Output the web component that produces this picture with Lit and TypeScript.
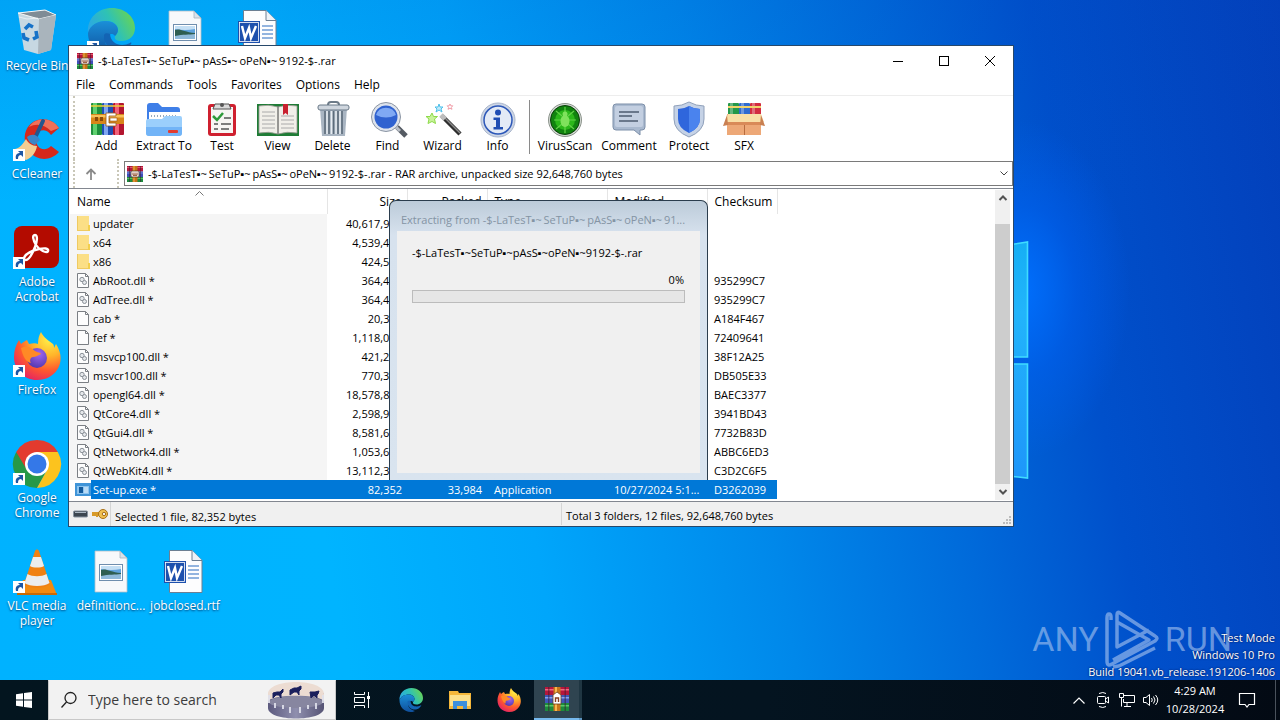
import { LitElement, html, svg, css, TemplateResult, SVGTemplateResult } from "lit";
import { customElement } from "lit/decorators.js";
import { classMap } from "lit/directives/class-map.js";

const SEP = "▪~";
const WIDE_SEP = "▪~\u2009";
const PARTS = ["-$-LaTesT", "SeTuP", "pAsS", "oPeN"];
const ARCHIVE = [...PARTS, "9192-$-.rar"].join(SEP);
const ARCHIVE_WIDE = [...PARTS, "9192-$-.rar"].join(WIDE_SEP);
const ARCHIVE_CUT = [...PARTS, "91..."].join(WIDE_SEP);

const pic = (w: number, h: number, box: string, body: SVGTemplateResult): TemplateResult =>
  html`<svg width=${w} height=${h} viewBox=${box} aria-hidden="true">${body}</svg>`;

/* ---------- small shared art ---------- */

const books = svg`
  <rect x="0" y="0" width="11" height="32" rx="1" fill="#1f8f3c"/><rect x="2" y="0" width="4" height="32" fill="#5fd06f"/>
  <rect x="11" y="0" width="11" height="32" rx="1" fill="#1f4fb4"/><rect x="13" y="0" width="4" height="32" fill="#7fa6f2"/>
  <rect x="22" y="0" width="11" height="32" rx="1" fill="#b3152f"/><rect x="24" y="0" width="4" height="32" fill="#f2607a"/>
  <path d="M0 2h33v2H0z" fill="#f0cf3a" opacity=".75"/>
  <rect x="0" y="11" width="33" height="10" fill="#d8861a"/><path d="M0 12h33v2.500H0z" fill="#f7c25c"/>
  <path d="M4 14h3v4H4zM9 14h3v4H9z" fill="#8a4b08"/>
  <path d="M15 10h10v3h-7v7h7v3H15z" fill="#fff" stroke="#9b5a1c" stroke-width=".8"/><rect x="19" y="15" width="7" height="3" fill="#fff" stroke="#9b5a1c" stroke-width=".6"/>
`;

const rarSmall = svg`
  <rect x="0" y="0" width="16" height="5.500" fill="#b5173c"/><rect x="0" y="5.500" width="16" height="5.500" fill="#3f4fb8"/>
  <rect x="0" y="11" width="16" height="5" fill="#1d8a3e"/><path d="M0 1h16v1H0z" fill="#e4566d"/><path d="M0 6.500h16v1H0z" fill="#7d93e6"/><path d="M0 12h16v1H0z" fill="#55bf63"/>
  <path d="M2 0h1v16H2zM13 0h1v16h-1z" fill="#3a1a2c" opacity=".5"/>
  <rect x="5.500" y="0" width="5" height="16" fill="#c47318"/><path d="M6.500 0h1v16h-1z" fill="#f5b04a"/>
  <rect x="4" y="5" width="8" height="6" rx="1" fill="#fff" stroke="#5a3a22" stroke-width=".8"/>
  <path d="M6 6.500v2.800h4V6.500M8 6.500v2.500" fill="none" stroke="#8a3f1e"/>
`;

const rarTask = svg`
  <rect x="0" y="0" width="8" height="24" fill="#b5173c"/><rect x="8" y="0" width="8" height="24" fill="#b5173c"/><rect x="16" y="0" width="8" height="24" fill="#b5173c"/>
  <rect x="0" y="8" width="24" height="8" fill="#3f56b8"/><rect x="0" y="16" width="24" height="8" fill="#1d8a3e"/>
  <path d="M0 2h24v1.500H0z" fill="#ec6a80"/><path d="M0 10h24v1.500H0z" fill="#86a0ee"/><path d="M0 18h24v1.500H0z" fill="#5cc86a"/>
  <path d="M3 0h1.500v24H3zM19.500 0H21v24h-1.500z" fill="#3a1a2c" opacity=".5"/>
  <rect x="8.500" y="0" width="7" height="24" fill="#c8761a"/><path d="M10 0h2v24h-2z" fill="#f7b750"/>
  <path d="M8 8l4-3 4 3v9H8z" fill="#fff" stroke="#6b4322" stroke-width=".8"/><path d="M10.500 15v-4h3v4" fill="none" stroke="#8a3f1e" stroke-width="1.400"/>
`;

const edge = svg`
  <defs>
    <linearGradient id="eg" x1="0" y1="0.600" x2="1" y2="0.200"><stop offset="0" stop-color="#2ba7e6"/><stop offset=".5" stop-color="#2fc2b4"/><stop offset="1" stop-color="#6ed64a"/></linearGradient>
    <linearGradient id="eb" x1="0" y1="0" x2="0" y2="1"><stop offset="0" stop-color="#1b8fd8"/><stop offset="1" stop-color="#0f4f9c"/></linearGradient>
  </defs>
  <path d="M1 25C0 10 11 0 25 0c13 0 23 9 23 20 0 8-6 13-13 13-6 0-8-2-7-5 2-2 3-4 3-6 0-5-5-9-11-9C11 13 3 17 1 25z" fill="url(#eg)"/>
  <path d="M1 25c2-8 10-12 17-12 8 0 13 4 13 9 0 2-1 4-3 6-2-3-6-2-8 0-5 5 0 15 12 18-3 2-7 2-9 2C11 48 1 38 1 25z" fill="url(#eb)"/>
  <path d="M17 27c-1 10 7 17 17 16 5-1 8-4 10-7 1-1 0-2-1-1-8 4-19 2-20-9-3-1-5-1-6 1z" fill="#1364b4"/>
`;

const firefox = svg`
  <defs>
    <radialGradient id="ff" cx=".75" cy=".15" r="1"><stop offset="0" stop-color="#fff04a"/><stop offset=".35" stop-color="#ffb42a"/><stop offset=".65" stop-color="#ff5a2d"/><stop offset="1" stop-color="#e0186e"/></radialGradient>
    <radialGradient id="fp" cx=".6" cy=".3" r=".8"><stop offset="0" stop-color="#a065f0"/><stop offset="1" stop-color="#4a34a8"/></radialGradient>
  </defs>
  <path d="M28 0c2 5 8 9 12 12 1 1 1 3 1 4l2-4c6 9 6 19 1 26-4 6-11 10-20 10C11 48 1 38 1 25 1 18 3 13 6 8l2 4c2-2 4-3 6-4l2 4c4-1 7-1 9 0 0-5 1-9 3-12z" fill="url(#ff)"/>
  <circle cx="24" cy="26" r="10" fill="url(#fp)"/>
  <path d="M8 16c6-3 11 0 14 3 3 2 5 1 6 3-3 1-5 3-8 3-2 0-4 3-2 6-5-1-8-6-10-15z" fill="#ff8a26"/>
`;

const shortcut = svg`
  <rect x="0" y="33" width="12" height="12" fill="#fff"/>
  <path d="M3 43c-1-4 1-6 4-6l-2-2h5v6l-2-2c-2 0-3 1-3 4z" fill="#1e57a4"/>
`;

const pictureFile = svg`
  <path d="M8 3h25l7 7v34H8z" fill="#f7f9fb" stroke="#b3bfc9" stroke-width=".8"/><path d="M33 3v7h7z" fill="#d9e2ea" stroke="#a8b4be" stroke-width=".8"/>
  <rect x="12.500" y="16.500" width="23" height="16" fill="#fff" stroke="#6f8eae"/><path d="M14 18h20v8H14z" fill="#5fa2dc"/><path d="M14 18h20v3q-10 2-20 0z" fill="#c4dff4"/><path d="M14 22c5-2 9 2 20 3v6H14z" fill="#2f5e50"/><path d="M14 28c8-2 14-1 20-2v5H14z" fill="#8fb9d9"/>
`;

const wordFile = svg`
  <path d="M8.500 2.500H31l10 10v32H8.500z" fill="#fdfdfe" stroke="#6c7f93"/><path d="M31 2.500v10h10" fill="#eef2f7" stroke="#6c7f93"/>
  <path d="M27 18h11M27 22h11M27 26h11M27 30h11" stroke="#2b6cc0" stroke-width="1.200"/>
  <rect x="3" y="13" width="22" height="22" fill="#1d50ad"/><rect x="4.500" y="14.500" width="19" height="19" fill="none" stroke="#fff" stroke-width=".8"/>
  <path d="M7 18l3 12 4-10 2 10 5-12" fill="none" stroke="#fff" stroke-width="2.400"/>
`;

/* ---------- desktop icons ---------- */

interface Shortcut { label: string; col: number; row: number; art: SVGTemplateResult; link?: boolean; }

const bin = svg`
  <path d="M5 5l27-3 11 5-5 35-13 4-14-4z" fill="#d3dbe0" opacity=".94"/><path d="M5 5l27-3 11 5-17 4z" fill="#7f8c96" stroke="#f4f7f8"/>
  <path d="M26 11l17-4-5 35-13 4z" fill="#a9b4bc"/><path d="M6 9l8 2 11-1" stroke="#fff" stroke-width=".8" fill="none" opacity=".7"/>
  <path d="M12 21l4-4 4 2M23 23l1 6-4 2M16 32l-5-2-1-5" fill="none" stroke="#1672c8" stroke-width="3.600"/>
`;
const ccleaner = svg`
  <path d="M46 12C38-1 16 0 12 18c-3 20 19 34 34 18l-8-6c-7 7-15 2-15-7s9-12 15-4z" fill="#d5281c"/><path d="M46 12C38 0 22 1 16 11c7-4 15-3 22 4z" fill="#f0715a"/>
  <path d="M30 5l-8 17" stroke="#24568e" stroke-width="4" stroke-linecap="round"/><path d="M14 21c5-4 11-2 13 3l-5 5c-4-1-7-4-8-8z" fill="#3a86c8"/>
  <path d="M2 33c5-1 8-5 11-10 2 4 6 7 11 7-1 6-5 12-11 14-3-1-3-3-5-5-2 1-5-2-6-6z" fill="#f3cd92"/>
`;
const acrobat = svg`
  <rect x="1" y="2" width="45" height="42" rx="8" fill="#b30b00"/>
  <path d="M11 34c1-4 9-8 15-9 5-1 10-1 9 2s-9-1-12-6-4-10-1-10 2 7 0 12-6 13-9 13-2-1-2-2z" fill="none" stroke="#fff" stroke-width="2.400"/>
`;
const chrome = svg`
  <path d="M24 24L3.200 12A24 24 0 0 1 44.800 12z" fill="#e33b2e"/>
  <path d="M24 24v24A24 24 0 0 1 3.200 12z" fill="#279847"/>
  <path d="M14 30L3.200 12 24 12z" fill="#e33b2e"/><path d="M34 30L24 48 14 30z" fill="#279847"/>
  <path d="M34 30L24 48A24 24 0 0 0 44.800 12H24z" fill="#fcc31e"/><circle cx="24" cy="24" r="12" fill="#fff"/><circle cx="24" cy="24" r="9.500" fill="#3478e8"/>
`;
const vlc = svg`
  <path d="M10 32h28l6 15H4z" fill="#f28a10"/><path d="M4 45h40v2H4z" fill="#c96a05"/><path d="M22 3c1-2 3-2 4 0l11 33c-5 5-21 5-26 0z" fill="#f08112"/>
  <path d="M20 9h8l3 9c-3 2-11 2-14 0zM14.500 26c5 3 14 3 19 0l3 9c-5 4-20 4-25 0z" fill="#eceded"/>
`;

const shortcuts: Shortcut[] = [
  { label: "Recycle Bin", col: 1, row: 1, art: bin },
  { label: "CCleaner", col: 1, row: 2, art: ccleaner, link: true },
  { label: "Adobe Acrobat", col: 1, row: 3, art: acrobat, link: true },
  { label: "Firefox", col: 1, row: 4, art: firefox, link: true },
  { label: "Google Chrome", col: 1, row: 5, art: chrome, link: true },
  { label: "VLC media player", col: 1, row: 6, art: vlc, link: true },
  { label: "", col: 2, row: 1, art: edge, link: true },
  { label: "", col: 3, row: 1, art: pictureFile },
  { label: "", col: 4, row: 1, art: wordFile },
  { label: "definitionc...", col: 2, row: 6, art: pictureFile },
  { label: "jobclosed.rtf", col: 3, row: 6, art: wordFile },
];

/* ---------- toolbar art ---------- */

const tools: Array<{ name: string; w: number; art: SVGTemplateResult; rule?: boolean }> = [
  { name: "Add", w: 55, art: svg`<g transform="translate(2 2)">${books}</g>` },
  { name: "Extract To", w: 60, art: svg`
    <path d="M1 5q0-3 3-3h8l4 4h15q3 0 3 3v22H1z" fill="#3f7fe8"/><rect x="3" y="11" width="31" height="14" fill="#fff"/>
    <path d="M5 15h26" stroke="#9ab" stroke-width="2" stroke-dasharray="1 2"/>
    <path d="M0 20q0-2 2-2h14l3-3h15q2 0 2 2v15q0 3-3 3H3q-3 0-3-3z" fill="#9bcffc"/><path d="M0 26h36v6q0 3-3 3H3q-3 0-3-3z" fill="#72b4f7"/><rect x="22" y="29" width="10" height="3" rx="1" fill="#e23b30"/>` },
  { name: "Test", w: 56, art: svg`
    <rect x="4" y="3" width="28" height="32" rx="3" fill="#cf202f"/><path d="M7 6h22v26H7z" fill="#f7f5f3"/><path d="M11 3h14l2 5H9z" fill="#d9d9d9" stroke="#555"/><circle cx="18" cy="4" r="2" fill="#555"/>
    <path d="M9 15l4 4 6-7" fill="none" stroke="#2e9a3a" stroke-width="2.500"/><path d="M20 17h7M10 23h4M17 23h10M10 28h4M17 28h8" stroke="#555" stroke-width="1.300"/>` },
  { name: "View", w: 55, art: svg`
    <path d="M-3 3h42v32H-3z" fill="#1f7c36"/><path d="M-1 5q10-2 19 1v27q-9-3-19-1zM37 5q-10-2-19 1v27q9-3 19-1z" fill="#f1efe9" stroke="#9a9a92" stroke-width=".8"/>
    <path d="M2 11h13M2 15h13M2 19h13M2 23h13M2 27h13M21 15h13M21 19h13M21 23h13M21 27h13" stroke="#aaa"/><path d="M18 5v28" stroke="#777"/><path d="M23 3h5v11l-2.500-2-2.500 2z" fill="#c8202e"/>` },
  { name: "Delete", w: 55, art: svg`
    <path d="M13 4q0-3 3-3h5q3 0 3 3" fill="none" stroke="#6d7b88" stroke-width="2"/><path d="M5 7h27l-2 28H7z" fill="#a9b5c2"/><path d="M10 10v23M14 10v23M18.500 10v23M23 10v23M27 10v23" stroke="#5c6b7a" stroke-width="1.600"/><path d="M12 10v23M16.500 10v23M21 10v23M25 10v23" stroke="#e8edf2" stroke-width="1.500"/>
    <rect x="3" y="4" width="31" height="5" rx="2" fill="#cfd6de" stroke="#697887"/>` },
  { name: "Find", w: 55, art: svg`
    <path d="M27 26l9 9" stroke="#555b63" stroke-width="5"/><path d="M25 25l5 5" stroke="#b8bec6" stroke-width="3"/><circle cx="16" cy="16" r="14.500" fill="#dde3ec" stroke="#8b95a3"/><circle cx="16" cy="16" r="11.500" fill="#2f62d0"/><path d="M6 14a10.500 10.500 0 0 1 20 0q-10 5-20 0z" fill="#7fa9f4"/>` },
  { name: "Wizard", w: 55, art: svg`
    <path d="M17 15l18 18" stroke="#2e2e2e" stroke-width="4.500"/><path d="M17 14l18 18" stroke="#8b8b8b" stroke-width="1.500"/><path d="M16 14l4 4" stroke="#bdbdbd" stroke-width="5"/>
    <path d="M7 12l1.500 3.500 4 0-3 2.500 1 4.500-3.500-2-4 2 1-4.500-3-2.500 4 0z" fill="#c8f29a" stroke="#8edb4a"/><path d="M14 3l1 3h3l-2 2 1 3-3-2-3 2 1-3-2-2h3z" fill="#bfeafb" stroke="#4fc0ea"/><path d="M25 3l.8 1.800h2l-1.500 1.500.7 2-2-1-2 1 .7-2L22.200 4.800h2z" fill="#fff" stroke="#ee8a97" stroke-width=".8"/>` },
  { name: "Info", w: 55, art: svg`
    <circle cx="18" cy="19" r="17" fill="#cdd6e6" stroke="#aab6cb"/><circle cx="18" cy="19" r="14" fill="#e3eaf6" stroke="#2c57b8" stroke-width="1.500"/><circle cx="18" cy="11.500" r="3" fill="#1f4db3"/><path d="M13.500 16.500H20V26h3v2.500h-9.500V26H16v-7h-2.500z" fill="#1f4db3"/>` },
  { name: "VirusScan", w: 64, rule: true, art: svg`
    <circle cx="18" cy="19" r="16.500" fill="#d5dad5" stroke="#8c948c"/><circle cx="18" cy="19" r="14.500" fill="#11830f" stroke="#0a3d0a"/><circle cx="18" cy="19" r="10" fill="#2bb81a"/>
    <path d="M9 10l6 5M27 10l-6 5M7 19h22M9 28l6-5M27 28l-6-5M18 6v26" stroke="#63d248" stroke-width="1.200"/><ellipse cx="18" cy="20" rx="4.500" ry="6" fill="#7fe25c"/><circle cx="18" cy="13" r="2.500" fill="#7fe25c"/>` },
  { name: "Comment", w: 64, art: svg`
    <path d="M5 3h26q3 0 3 3v20q0 3-3 3h-2v5l-6-5H5q-3 0-3-3V6q0-3 3-3z" fill="#a9b9cf" stroke="#7d8fa9"/><rect x="4" y="5" width="28" height="21" rx="2" fill="#c3cfe1"/><path d="M8 11h20M8 15h13M8 20h19" stroke="#4d5c70" stroke-width="1.500"/>` },
  { name: "Protect", w: 56, art: svg`
    <path d="M18 1q7 4 15 4v13q0 12-15 18Q3 30 3 18V5q8 0 15-4z" fill="#c5d2e6" stroke="#8fa0ba"/><path d="M18 5q5 3 11 3v10q0 9-11 14Q7 27 7 18V8q6 0 11-3z" fill="#2f66dc"/><path d="M18 5q5 3 11 3v10q0 9-11 14z" fill="#4a83ee"/>` },
  { name: "SFX", w: 54, art: svg`
    <rect x="2" y="2" width="11" height="14" rx="1" fill="#25984a"/><rect x="13" y="2" width="11" height="14" rx="1" fill="#2f6bd0"/><rect x="24" y="2" width="11" height="14" rx="1" fill="#d32c3f"/>
    <path d="M4 2h3v12H4zM15 2h3v12h-3zM26 2h3v12h-3z" fill="#fff" opacity=".3"/><path d="M2 5h33v2H2z" fill="#f2d36b"/>
    <path d="M1 13h34v21H1z" fill="#eda877"/><path d="M2 13h33l3 8H-1z" fill="#f9dfa6"/><path d="M1 21h34v3H1z" fill="#d98a58"/><path d="M18.500 24v10" stroke="#b86c3e"/><path d="M1 14l-4 11 5-1zM35 14l4 11-5-1z" fill="#c98052"/>` },
];

/* ---------- archive content ---------- */

type Kind = "folder" | "dll" | "file" | "exe";
interface Entry { name: string; kind: Kind; size: string; packed?: string; type?: string; modified?: string; crc?: string; }

const entries: Entry[] = [
  { name: "updater", kind: "folder", size: "40,617,984" },
  { name: "x64", kind: "folder", size: "4,539,424" },
  { name: "x86", kind: "folder", size: "424,528" },
  { name: "AbRoot.dll *", kind: "dll", size: "364,496", crc: "935299C7" },
  { name: "AdTree.dll *", kind: "dll", size: "364,496", crc: "935299C7" },
  { name: "cab *", kind: "file", size: "20,382", crc: "A184F467" },
  { name: "fef *", kind: "file", size: "1,118,062", crc: "72409641" },
  { name: "msvcp100.dll *", kind: "dll", size: "421,200", crc: "38F12A25" },
  { name: "msvcr100.dll *", kind: "dll", size: "770,384", crc: "DB505E33" },
  { name: "opengl64.dll *", kind: "dll", size: "18,578,800", crc: "BAEC3377" },
  { name: "QtCore4.dll *", kind: "dll", size: "2,598,912", crc: "3941BD43" },
  { name: "QtGui4.dll *", kind: "dll", size: "8,581,632", crc: "7732B83D" },
  { name: "QtNetwork4.dll *", kind: "dll", size: "1,053,696", crc: "ABBC6ED3" },
  { name: "QtWebKit4.dll *", kind: "dll", size: "13,112,320", crc: "C3D2C6F5" },
  { name: "Set-up.exe *", kind: "exe", size: "82,352", packed: "33,984", type: "Application", modified: "10/27/2024 5:1...", crc: "D3262039" },
];

const sheet = svg`<path d="M.5 1.500h8l3 3v11H.500z" fill="#fdfdfd" stroke="#7b7f84"/><path d="M8.500 1.500v3h3" fill="none" stroke="#7b7f84"/>`;
const kinds: Record<Kind, SVGTemplateResult> = {
  folder: svg`<path d="M0 1h12v10h1v5H0z" fill="#fbdf86"/><path d="M0 1h1v15H0zM0 15h12v1H0z" fill="#efca62"/><path d="M11 10h2v6h-2z" fill="#f2cf4e"/>`,
  file: sheet,
  dll: svg`${sheet}<circle cx="5" cy="7.500" r="2.200" fill="#e4e7ea" stroke="#8a9097"/><circle cx="7.500" cy="10.500" r="2" fill="#e4e7ea" stroke="#8a9097"/>`,
  exe: svg`<rect x="-2" y="2" width="16" height="13" fill="#3f94d8"/><rect x="0" y="5" width="12" height="8" fill="#8cc3ee"/><rect x="2" y="6" width="4" height="6" fill="#125a9c"/><path d="M7 7h4M7 9h4M7 11h4" stroke="#e8f3fc"/>`,
};

@customElement("archive-window")
class ArchiveWindow extends LitElement {
  static styles = css`
    :host { display: block; background: #fff; border: 1px solid #27486a; color: #000;
      font: 12px/16px "Open Sans", "Noto Sans", sans-serif; }
    svg { display: block; overflow: visible; flex: none; }
    button { font: inherit; color: inherit; background: none; border: 0; padding: 0; margin: 0; }
    .title { display: flex; align-items: center; height: 29px; padding-left: 8px; gap: 5px; }
    .title-text { flex: 1; font-size: 11px; padding-top: 1px; }
    .captions { display: flex; }
    .caption { width: 46px; height: 29px; display: grid; place-items: center; }
    .menu { display: flex; height: 20px; align-items: center; padding-left: 7px; gap: 14px; border-bottom: 1px solid #ededed; }
    .tools { display: flex; height: 63px; padding-left: 4px; }
    .grip { width: 0; border-left: 2px dotted #c9c7b8; }
    .tools .grip { margin-right: 4px; }
    .tool { display: flex; flex-direction: column; align-items: center; padding-top: 5px; gap: 1px; }
    .rule { width: 1px; height: 54px; margin: 4px 3px 0 4px; background: #8a8a8a; }
    .path { display: flex; height: 29px; align-items: center; padding-left: 4px; }
    .path .grip { align-self: stretch; }
    .up { width: 32px; display: grid; place-items: center; margin-right: 10px; }
    .combo { flex: 1; display: flex; align-items: center; height: 23px; border: 1px solid #7a7a7a; padding: 0 4px 0 2px; gap: 5px; margin-left: 5px; }
    .combo select { flex: 1; min-width: 0; appearance: none; border: 0; background: none; padding: 0; color: inherit; font: 11px/16px "Open Sans", "Noto Sans", sans-serif; }
    .list { display: flex; border-top: 1px solid #828790; border-bottom: 1px solid #828790; height: 312px; }
    .pane { flex: 1; overflow: hidden; padding-left: 1px; }
    table { border-collapse: collapse; table-layout: fixed; width: 707px; font-size: 11px; }
    .c-name { width: 257px; } .c-num { width: 80px; } .c-type { width: 120px; } .c-mod { width: 100px; } .c-crc { width: 70px; }
    th { height: 25px; padding: 0 5px 0 7px; font-weight: 400; font-size: 12px; text-align: left; border-right: 1px solid #e5e5e5; box-sizing: border-box; position: relative; }
    th.num, td.num { text-align: right; }
    .sort { position: absolute; left: 125px; top: 2px; }
    td { height: 19px; padding: 0 5px 0 7px; white-space: nowrap; line-height: 19px; box-sizing: border-box; }
    td.name { background: #f5f5f5; }
    .cell { display: flex; align-items: center; gap: 2px; }
    .picked td { background: #0078d7; color: #fff; }
    .picked td.name { background: linear-gradient(90deg, #fff 21px, #0078d7 21px); }
    .scroll { display: flex; flex-direction: column; align-items: center; width: 15px; margin: 1px 3px 1px 0; background: #f0f0f0; }
    .scroll button { width: 15px; height: 16px; display: grid; place-items: center; }
    .thumb { width: 15px; flex: 1; margin-top: 18px; background: #cdcdcd; }
    .status { display: flex; height: 24px; background: #f0f0f0; align-items: center; font-size: 11px; line-height: 24px; }
    .badges { display: flex; align-items: center; gap: 3px; width: 42px; padding-left: 4px; box-sizing: border-box; align-self: stretch; border-right: 1px solid #d5d5d5; }
    .picked-info { width: 451px; padding-left: 4px; box-sizing: border-box; border-right: 1px solid #d5d5d5; }
    .total { flex: 1; padding-left: 4px; }
    .picked-info, .total { padding-top: 2px; height: 22px; }
    .sizer { align-self: flex-end; }
  `;

  render() {
    return html`
      <header class="title">
        ${pic(16, 16, "0 0 16 16", rarSmall)}
        <span class="title-text">${ARCHIVE_WIDE}</span>
        <span class="captions">
          <button class="caption" aria-label="Minimize">${pic(10, 10, "0 0 10 10", svg`<path d="M0 5.500h10" stroke="#000"/>`)}</button>
          <button class="caption" aria-label="Maximize">${pic(10, 10, "0 0 10 10", svg`<rect x=".5" y=".5" width="9" height="9" fill="none" stroke="#000"/>`)}</button>
          <button class="caption" aria-label="Close">${pic(10, 10, "0 0 10 10", svg`<path d="M0 0l10 10M10 0L0 10" stroke="#000"/>`)}</button>
        </span>
      </header>
      <nav class="menu">${["File", "Commands", "Tools", "Favorites", "Options", "Help"].map((m) => html`<button>${m}</button>`)}</nav>
      <div class="tools">
        <span class="grip"></span>
        ${tools.map((t) => html`
          ${t.rule ? html`<span class="rule"></span>` : ""}
          <button class="tool" style="width:${t.w}px">${pic(36, 36, "0 0 36 36", t.art)}<span>${t.name}</span></button>`)}
      </div>
      <div class="path">
        <span class="grip"></span>
        <button class="up" aria-label="Up one level">${pic(12, 12, "0 0 12 12", svg`<path d="M6 12V1.500M1.500 6L6 1.500 10.500 6" fill="none" stroke="#8a8a8a" stroke-width="1.800"/>`)}</button>
        <span class="grip"></span>
        <label class="combo">
          ${pic(16, 16, "0 0 16 16", rarSmall)}
          <select aria-label="Archive path"><option>${ARCHIVE_WIDE} - RAR archive, unpacked size 92,648,760 bytes</option></select>
          ${pic(8, 5, "0 0 8 5", svg`<path d="M.5.500L4 4 7.500.500" fill="none" stroke="#444"/>`)}
        </label>
      </div>
      <div class="list">
        <div class="pane">
          <table>
            <colgroup><col class="c-name"><col class="c-num"><col class="c-num"><col class="c-type"><col class="c-mod"><col class="c-crc"></colgroup>
            <thead><tr>
              <th>Name<span class="sort">${pic(9, 5, "0 0 9 5", svg`<path d="M.5 4.500l4-4 4 4" fill="none" stroke="#777"/>`)}</span></th>
              <th class="num">Size</th><th class="num">Packed</th><th>Type</th><th>Modified</th><th>Checksum</th>
            </tr></thead>
            <tbody>${entries.map((e) => html`
              <tr class=${classMap({ picked: e.kind === "exe" })}>
                <td class="name"><span class="cell">${pic(14, 17, "0 0 14 17", kinds[e.kind])}<span>${e.name}</span></span></td>
                <td class="num">${e.size}</td><td class="num">${e.packed}</td><td>${e.type}</td><td>${e.modified}</td><td>${e.crc}</td>
              </tr>`)}</tbody>
          </table>
        </div>
        <div class="scroll">
          <button aria-label="Scroll up">${pic(8, 6, "0 0 8 6", svg`<path d="M.5 5L4 1.500 7.500 5" fill="none" stroke="#505050" stroke-width="2"/>`)}</button>
          <span class="thumb"></span>
          <button aria-label="Scroll down">${pic(8, 6, "0 0 8 6", svg`<path d="M.5 1L4 4.500 7.500 1" fill="none" stroke="#505050" stroke-width="2"/>`)}</button>
        </div>
      </div>
      <footer class="status">
        <span class="badges">
          ${pic(16, 8, "0 0 16 8", svg`<rect x=".5" y="1" width="14" height="6" rx="1" fill="#3c4650" stroke="#8793a0"/><path d="M2 2.500h11" stroke="#aab6c2"/>`)}
          ${pic(16, 12, "0 0 16 12", svg`<path d="M0 4h9v4H6v1H4V8H0z" fill="#d79a2a"/><circle cx="11" cy="6" r="4.500" fill="#f0c050" stroke="#a8701a"/><circle cx="12" cy="6" r="1.700" fill="#f0f0f0" stroke="#a8701a"/>`)}
        </span>
        <span class="picked-info">Selected 1 file, 82,352 bytes</span>
        <span class="total">Total 3 folders, 12 files, 92,648,760 bytes</span>
        <span class="sizer">${pic(12, 12, "0 0 12 12", svg`<path d="M8 2h2v2H8zM5 5h2v2H5zM8 5h2v2H8zM2 8h2v2H2zM5 8h2v2H5zM8 8h2v2H8z" fill="#bcbcbc"/>`)}</span>
      </footer>`;
  }
}

@customElement("extract-dialog")
class ExtractDialog extends LitElement {
  static styles = css`
    :host { display: flex; flex-direction: column; box-sizing: border-box; border: 1px solid #2b3d4d; border-bottom-width: 0; border-radius: 7px 7px 0 0;
      background: linear-gradient(#bccbd9 0, #d7e2ee 34px, #d9e4ef); padding: 0 7px 7px; color: #000; font: 11px/16px "Open Sans", "Noto Sans", sans-serif; }
    .head { height: 30px; line-height: 37px; padding-left: 4px; color: #8494a4; white-space: nowrap; overflow: hidden; }
    .body { flex: 1; background: #f0f0f0; padding: 14px 15px; }
    .file { display: block; }
    .percent { display: block; text-align: right; margin: 11px 0 2px; padding-right: 1px; }
    progress { display: block; width: 100%; height: 13px; box-sizing: border-box; appearance: none; border: 1px solid #bcbcbc; background: #e6e6e6; }
    progress::-webkit-progress-bar { background: #e6e6e6; }
    progress::-webkit-progress-value { background: #06b025; }
  `;

  render() {
    return html`
      <div class="head">Extracting from ${ARCHIVE_CUT}</div>
      <div class="body">
        <label class="file" for="bar">${ARCHIVE}</label>
        <span class="percent">0%</span>
        <progress id="bar" max="100" value="0"></progress>
      </div>`;
  }
}

@customElement("task-bar")
class TaskBar extends LitElement {
  static styles = css`
    :host { display: flex; height: 40px; background: linear-gradient(90deg, #03151f, #041420 60%, #030a14); color: #fff; font: 12px/18px "Open Sans", "Noto Sans", sans-serif; }
    svg { display: block; overflow: visible; flex: none; }
    button { font: inherit; color: inherit; background: none; border: 0; padding: 0; display: grid; place-items: center; }
    .start { width: 48px; }
    .search { display: flex; align-items: center; width: 288px; box-sizing: border-box; padding: 0 11px 0 12px; gap: 11px; background: #f2f2f2; border: 1px solid #c8c8c8; border-top-color: #f2f2f2; }
    .search input { flex: 1; min-width: 0; border: 0; background: none; outline: 0; padding: 0; font: 14px/20px "Open Sans", "Noto Sans", sans-serif; }
    .search input::placeholder { color: #3c3c3c; opacity: 1; }
    .apps { display: flex; padding: 0 1px; }
    .app { width: 49px; }
    .active { width: 45px; background: #2f4450; border-bottom: 2px solid #76b9ed; box-sizing: border-box; }
    .stack { width: 3px; background: #1f3642; border-bottom: 2px solid #5d96c2; box-sizing: border-box; }
    .tray { margin-left: auto; display: flex; align-items: center; }
    .tray button { width: 24px; height: 40px; }
    .tray .clock { width: 62px; display: block; text-align: center; margin: 0 4px 0 1px; font-size: 11px; }
    .tray .note { width: 34px; }
    .peek { width: 4px; height: 40px; border-left: 1px solid #4a525c; margin-left: 11px; }
  `;

  render() {
    return html`
      <button class="start" aria-label="Start">${pic(16, 16, "0 0 16 16", svg`<path d="M0 2.300L7 1.300V7.500H0zM8 1.100L16 0v7.500H8zM0 8.500h7v6.200l-7-1zM8 8.500h8V16l-8-1.100z" fill="#fff"/>`)}</button>
      <label class="search">
        ${pic(16, 16, "0 0 16 16", svg`<circle cx="9.500" cy="6" r="5.500" fill="none" stroke="#222" stroke-width="1.300"/><path d="M5.500 10L.5 15.500" stroke="#222" stroke-width="1.300"/>`)}
        <input placeholder="Type here to search" aria-label="Search">
        ${pic(56, 38, "0 0 56 38", svg`
          <defs><linearGradient id="drum"><stop offset="0" stop-color="#5c5a7e"/><stop offset=".5" stop-color="#8f8fae"/><stop offset="1" stop-color="#565475"/></linearGradient></defs>
          <path d="M0 12v15c0 14 56 14 56 0V12z" fill="url(#drum)"/><path d="M0 13C0-3 56-3 56 13v7c-6-7-50-7-56 0z" fill="#ecdcd2"/><ellipse cx="28" cy="21" rx="27" ry="6" fill="#8786a0"/>
          <path d="M1 14v8M7 22v5M15 24v4M22 26v6M32 26v6M40 24v4M48 22v6M55 14v8" stroke="#dfe0ec" stroke-width="1.800"/>
          <path d="M5 12l4-1 3 0 3-3 0 3-2 2 0 4-2-3-3 0-3 3zM22 9l4-2 3 0 4-2 0 3-2 2 0 4-2-3-3 0-4 3zM42 11l3 0 2 0 4-1-1 3-1 1 0 3-2-2-2 0-2 2z" fill="#1b1f5c" stroke="#1b1f5c"/>`)}
      </label>
      <div class="apps">
        <button class="app" aria-label="Task View">${pic(16, 16, "0 0 16 16", svg`<path d="M.5 0v2.500h10V0M.5 16v-2.500h10V16M.5 5.500h10v5H.500zM14.500 0v16" fill="none" stroke="#fff"/><rect x="13" y="4" width="3" height="3" fill="#fff"/>`)}</button>
        <button class="app" aria-label="Edge">${pic(24, 24, "0 0 48 48", edge)}</button>
        <button class="app" aria-label="File Explorer">${pic(22, 18, "0 0 22 18", svg`<path d="M0 0h9l1 2h12v16H0z" fill="#f5b73a"/><path d="M1 4h20v11H1z" fill="#fde08a"/><path d="M4 18v-8h14v8h-4v-3H8v3z" fill="#3d8fdc"/>`)}</button>
        <button class="app" aria-label="Firefox">${pic(24, 24, "0 0 48 48", firefox)}</button>
      </div>
      <button class="active" aria-label="WinRAR">${pic(24, 24, "0 0 24 24", rarTask)}</button>
      <span class="stack"></span>
      <div class="tray">
        <button aria-label="Show hidden icons">${pic(12, 7, "0 0 12 7", svg`<path d="M.5 6.500L6 1l5.500 5.500" fill="none" stroke="#fff" stroke-width="1.200"/>`)}</button>
        <button aria-label="Meet Now">${pic(12, 16, "0 0 12 16", svg`<rect x=".5" y="4.500" width="8" height="7" rx="1" fill="none" stroke="#fff"/><path d="M8.500 7l3-2v6l-3-2M2 1.500q4-2 7 0M2 14.500q4 2 7 0" fill="none" stroke="#fff"/>`)}</button>
        <button aria-label="Network">${pic(16, 14, "0 0 16 14", svg`<path d="M5 2.500h10.500v7H4.500V6M8 9.500v4M5 13.500h7M.5.500h4v4h-4zM2.500 4.500v9" fill="none" stroke="#fff"/>`)}</button>
        <button aria-label="Volume">${pic(16, 14, "0 0 16 14", svg`<path d="M.5 4.500h2.500l3.500-3v11l-3.500-3H.500zM8.500 5q1.500 2 0 4M10.500 3.500q3 3.500 0 7M12.500 2q4.500 5 0 10" fill="none" stroke="#fff"/>`)}</button>
        <button class="clock">4:29 AM<br>10/28/2024</button>
        <button class="note" aria-label="Notifications">${pic(16, 16, "0 0 16 16", svg`<path d="M.5 1.500h15v11H10L8 15l-2-2.500H.500z" fill="none" stroke="#fff" stroke-width="1.200"/>`)}</button>
        <span class="peek"></span>
      </div>`;
  }
}

@customElement("app-root")
class AppRoot extends LitElement {
  static styles = css`
    :host { display: flex; flex-direction: column; height: 100vh; overflow: hidden; font: 12px/15px "Open Sans", "Noto Sans", sans-serif; color: #fff; }
    svg { display: block; overflow: visible; }
    .desktop { flex: 1; min-height: 0; position: relative; overflow: hidden;
      background:
        radial-gradient(ellipse 110px 170px at 1020px 290px, rgba(0, 112, 255, 0.95), rgba(0, 100, 250, 0.45) 50%, rgba(0, 90, 240, 0) 100%),
        linear-gradient(180deg, rgba(0, 70, 190, 0.14), rgba(0, 80, 200, 0) 30%),
        linear-gradient(80deg, #00b2ff 0%, #00b4ff 25%, #00a6fb 40%, #0088ea 57%, #006ada 71%, #0050cb 82%, #033fba 100%); }
    .icons { display: grid; grid-template-columns: repeat(4, 74px); grid-auto-rows: 108px; padding-top: 8px; }
    .item { display: flex; flex-direction: column; align-items: center; gap: 2px; color: inherit; text-decoration: none; text-align: center; text-shadow: 0 1px 2px rgba(0, 30, 80, 0.8); }
    .glass { position: absolute; left: 1008px; top: 240px; }
    archive-window { position: absolute; left: 68px; right: 266px; top: 45px; }
    extract-dialog { position: absolute; left: 389px; top: 200px; width: 319px; height: 280px; }
    .brand { position: absolute; right: 48px; bottom: 12px; display: flex; align-items: center; gap: 6px; color: rgba(170, 198, 240, 0.6); font: 34px/58px "Roboto", sans-serif; }
    .build { position: absolute; right: 5px; bottom: 0; text-align: right; line-height: 17px; font-size: 11px; text-shadow: 0 0 2px #003; }
  `;

  render() {
    return html`
      <main class="desktop">
        <div class="icons">
          ${shortcuts.map((s) => html`
            <a class="item" href="#" style="grid-area:${s.row}/${s.col}">
              ${pic(48, 48, "0 0 48 48", svg`${s.art}${s.link ? shortcut : ""}`)}
              <span class="label">${s.label}</span>
            </a>`)}
        </div>
        <div class="glass">${pic(21, 240, "0 0 21 240", svg`
          <defs><linearGradient id="pane" x2="0" y2="1"><stop offset="0" stop-color="#16aef4"/><stop offset=".3" stop-color="#22b4fb"/><stop offset="1" stop-color="#1e96fa"/></linearGradient></defs>
          <path d="M0 5l19.500-3v115H0zM0 124h19.500v114L0 236z" fill="url(#pane)" stroke="#3fdcff" stroke-width="1.600"/>`)}</div>
        <div class="brand">
          <span>ANY</span>
          ${pic(54, 58, "0 0 54 58", svg`<path d="M6 10V7q0-3-2-3T2 8v43q0 6 5 3l43-23q4-3 0-5L15 3q-3-2-3 2v32l32-17M8 57l6-1 36-18M12 12l32 18L8 50" fill="none" stroke="currentColor" stroke-width="3.500" stroke-linejoin="round"/>`)}
          <span>RUN</span>
        </div>
        <div class="build">Test Mode<br>Windows 10 Pro<br>Build 19041.vb_release.191206-1406</div>
        <archive-window></archive-window>
        <extract-dialog></extract-dialog>
      </main>
      <task-bar></task-bar>`;
  }
}
